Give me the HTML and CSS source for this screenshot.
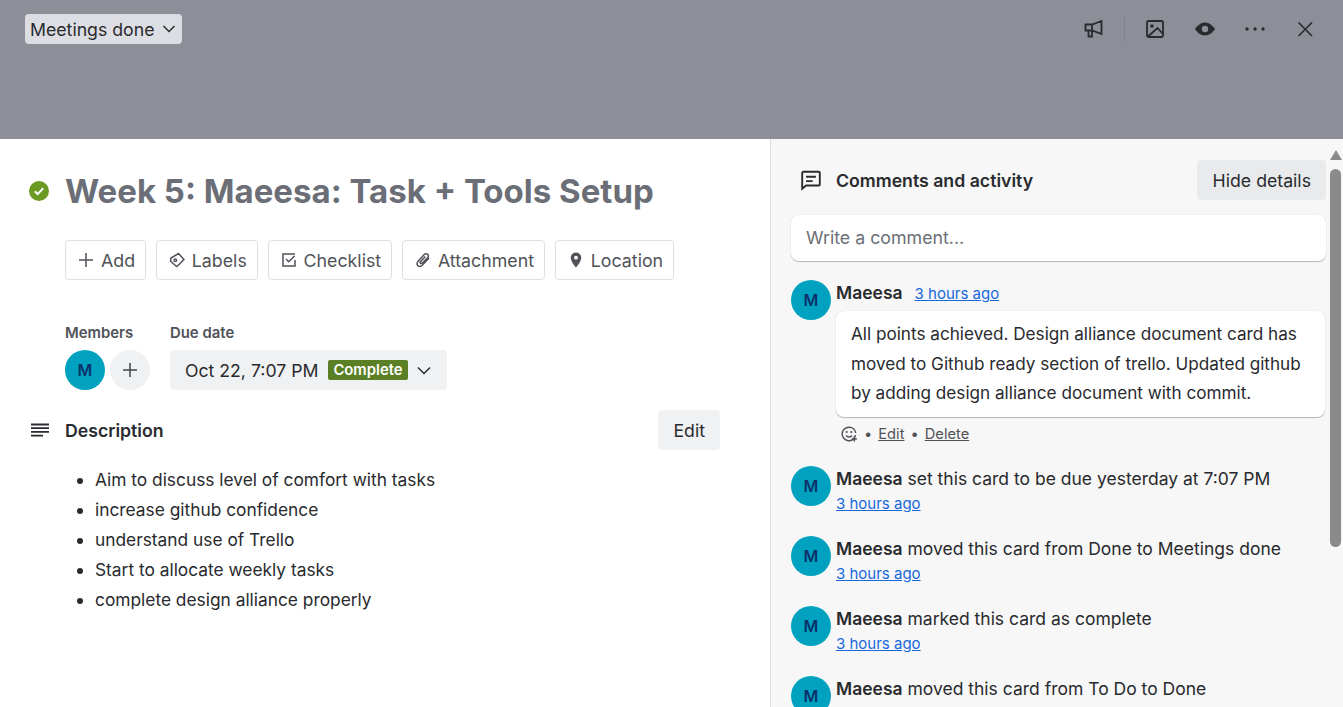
FILE: index.html
```html
<!DOCTYPE html>
<html lang="en">
<head>
    <meta charset="UTF-8">
    <meta name="viewport" content="width=device-width, initial-scale=1.0">
    <title>Week 5: Maeesa: Task + Tools Setup</title>
    <link rel="stylesheet" href="styles.css">
</head>
<body>

    <header class="cover">
        <button class="list-select">Meetings done
            <svg class="chevron" viewBox="0 0 16 16"><path d="M2.500 5l5.500 5.500L13.500 5"/></svg>
        </button>
        <div class="cover-actions">
            <svg class="cover-icon megaphone" viewBox="0 0 20 20"><path d="M1.500 5.500H8L17.500 2v13L8 11.500H1.500z M4.500 11.500v6H8v-6 M8 5.500v6"/></svg>
            <span class="cover-divider"></span>
            <svg class="cover-icon image" viewBox="0 0 20 20"><rect x="2" y="2" width="16" height="16" rx="1.500"/><path d="M3 17.500L12.500 9l5 5.500"/><circle class="solid" cx="7" cy="7" r="1.800"/></svg>
            <svg class="cover-icon eye" viewBox="0 0 20 20"><path class="solid" fill-rule="evenodd" d="M10 3.500c4.500 0 8 3.500 10 6.500-2 3-5.500 6.500-10 6.500S2 13 0 10c2-3 5.500-6.500 10-6.500zm0 3.300a3.200 3.200 0 100 6.400 3.200 3.200 0 000-6.400z"/></svg>
            <svg class="cover-icon dots" viewBox="0 0 20 20"><circle class="solid" cx="2" cy="10" r="1.700"/><circle class="solid" cx="10" cy="10" r="1.700"/><circle class="solid" cx="18" cy="10" r="1.700"/></svg>
            <svg class="cover-icon close" viewBox="0 0 20 20"><path d="M3.500 3.500l13.500 13.500M17 3.500L3.500 17"/></svg>
        </div>
    </header>

    <div class="card">
        <main class="details">
            <div class="title-row">
                <svg class="done-icon" viewBox="0 0 20 20"><circle cx="10" cy="10" r="10"/><path d="M5.800 10.300l2.800 2.800 5.600-5.800"/></svg>
                <h1>Week 5: Maeesa: Task + Tools Setup</h1>
            </div>

            <div class="actions">
                <button class="action">
                    <svg viewBox="0 0 16 16"><path d="M8 1v14M1 8h14"/></svg>Add
                </button>
                <button class="action">
                    <svg viewBox="0 0 16 16"><path d="M9.500 1.500l5.500 6-6.500 6.500c-.5.500-1 .500-1.500 0L2.500 10C2 9.500 1.500 9 1.500 8.500L2 6z"/><circle cx="6.300" cy="8.300" r="1.300"/></svg>Labels
                </button>
                <button class="action">
                    <svg viewBox="0 0 16 16"><path d="M14 2H2v12h12V8"/><path d="M5 7l2.700 2.700L13.500 4"/></svg>Checklist
                </button>
                <button class="action">
                    <svg viewBox="0 0 16 16"><path d="M14 6l-6.500 7c-1.500 1.500-3.500 1.700-4.700.6s-1-3 .5-4.600l5.700-6.200c1-1 2.600-1.300 3.700-.4s.9 2.500-.1 3.500L7.300 11c-.6.600-1.300.7-1.800.2s-.4-1.200.2-1.800L10.300 4.500"/></svg>Attachment
                </button>
                <button class="action">
                    <svg viewBox="0 0 16 16"><path class="solid" fill-rule="evenodd" d="M8 .5c2.900 0 5.200 2.200 5.200 5.200 0 3.100-3.100 7.500-5.200 9.800-2.100-2.300-5.200-6.700-5.200-9.800C2.800 2.700 5.100.5 8 .5zm0 3.300a1.900 1.900 0 100 3.800 1.900 1.900 0 000-3.800z"/></svg>Location
                </button>
            </div>

            <div class="meta">
                <div>
                    <h3>Members</h3>
                    <div class="member-row">
                        <span class="avatar">M</span>
                        <span class="add-member"><svg viewBox="0 0 16 16"><path d="M8 1v14M1 8h14"/></svg></span>
                    </div>
                </div>
                <div>
                    <h3>Due date</h3>
                    <button class="due">
                        Oct 22, 7:07 PM
                        <span class="badge">Complete</span>
                        <svg class="chevron" viewBox="0 0 16 16"><path d="M2 5.500L8 11.500l6-6"/></svg>
                    </button>
                </div>
            </div>

            <section class="description">
                <div class="description-head">
                    <svg class="lines" viewBox="0 0 20 14"><path d="M1 1.500h18M1 5.200h18M1 8.900h18M1 12.600h12"/></svg>
                    <h2>Description</h2>
                    <button class="edit">Edit</button>
                </div>
                <ul>
                    <li>Aim to discuss level of comfort with tasks</li>
                    <li>increase github confidence</li>
                    <li>understand use of Trello</li>
                    <li>Start to allocate weekly tasks</li>
                    <li>complete design alliance properly</li>
                </ul>
            </section>
        </main>

        <aside class="sidebar">
            <div class="sidebar-head">
                <svg class="comment-icon" viewBox="0 0 20 20"><path d="M3 2.500h14c.5 0 1 .5 1 1V14c0 .5-.5 1-1 1H5.500L2 18V3.500c0-.5.500-1 1-1z"/><path d="M5.500 7h9M5.500 11h6"/></svg>
                <h2>Comments and activity</h2>
                <button class="hide">Hide details</button>
            </div>
            <div class="comment-box">Write a comment...</div>

            <div class="entry comment-entry">
                <span class="avatar">M</span>
                <div class="entry-body">
                    <div class="comment-head"><b>Maeesa</b><a href="#">3 hours ago</a></div>
                    <div class="comment-text">All points achieved. Design alliance document card has moved to Github ready section of trello. Updated github by adding design alliance document with commit.</div>
                    <div class="comment-links">
                        <svg viewBox="0 0 16 16"><path d="M14.500 9A6.700 6.700 0 118 1.300 6.700 6.700 0 0114.700 7"/><path d="M5 9.500c1.500 2 4.500 2 6 0"/><circle class="solid" cx="5.700" cy="6" r="1.100"/><circle class="solid" cx="10.300" cy="6" r="1.100"/><path d="M13.300 10.500v5M10.800 13h5"/></svg>
                        <span class="dot">•</span><a href="#">Edit</a><span class="dot">•</span><a href="#">Delete</a>
                    </div>
                </div>
            </div>

            <div class="entry">
                <span class="avatar">M</span>
                <div class="entry-body"><b>Maeesa</b> set this card to be due yesterday at 7:07 PM<br><a href="#">3 hours ago</a></div>
            </div>
            <div class="entry">
                <span class="avatar">M</span>
                <div class="entry-body"><b>Maeesa</b> moved this card from Done to Meetings done<br><a href="#">3 hours ago</a></div>
            </div>
            <div class="entry">
                <span class="avatar">M</span>
                <div class="entry-body"><b>Maeesa</b> marked this card as complete<br><a href="#">3 hours ago</a></div>
            </div>
            <div class="entry">
                <span class="avatar">M</span>
                <div class="entry-body"><b>Maeesa</b> moved this card from To Do to Done</div>
            </div>
        </aside>

        <div class="scrollbar">
            <span class="scroll-up"></span>
            <span class="scroll-thumb"></span>
        </div>
    </div>

</body>
</html>
```

FILE: styles.css
```css
* {
    box-sizing: border-box;
}
html, body {
    height: 100%;
}
body {
    font-family: Inter, "Liberation Sans", sans-serif;
    margin: 0;
    overflow: hidden;
    color: #292a2e;
    background-color: #fff;
    font-size: 16px;
}
button {
    font-family: inherit;
    font-size: 16px;
    border: none;
    cursor: pointer;
}
svg {
    display: block;
    fill: none;
    stroke: currentColor;
    stroke-width: 1.5;
}
svg .solid {
    fill: currentColor;
    stroke: none;
}
a {
    color: #1868db;
}

/* cover */
.cover {
    height: 139px;
    background-color: #8c8f97;
    display: flex;
    justify-content: space-between;
    align-items: flex-start;
    padding: 14px 28px 0 25px;
}
.list-select {
    height: 30px;
    padding: 0 5px;
    display: flex;
    align-items: center;
    gap: 7px;
    background-color: #dddee3;
    color: #292a2e;
    border-radius: 4px;
    font-size: 17.700px;
}
.list-select .chevron {
    width: 16px;
    height: 16px;
}
.cover-actions {
    display: flex;
    align-items: center;
    height: 30px;
    color: #292a2e;
}
.cover-icon {
    width: 20px;
    height: 20px;
    stroke-width: 1.800;
}
.cover-divider {
    width: 1px;
    height: 26px;
    margin: 0 20px;
    background-color: #80838b;
}
.image,
.eye,
.dots {
    margin-right: 30px;
}
.close {
    stroke-width: 1.600;
}

/* card layout */
.card {
    height: 568px;
    display: flex;
    overflow: hidden;
}
.details {
    width: 771px;
    flex: none;
    padding: 34px 50px 0 29px;
    border-right: 1px solid #dcdfe4;
    color: #44454c;
}
.title-row {
    display: flex;
    align-items: center;
    gap: 16px;
    height: 36px;
}
.done-icon {
    width: 20px;
    height: 20px;
    flex: none;
}
.done-icon circle {
    fill: #6a9a23;
    stroke: none;
}
.done-icon path {
    stroke: #fff;
    stroke-width: 2;
}
h1 {
    margin: 0;
    font-size: 33px;
    font-weight: 700;
    color: #6b6e76;
    white-space: nowrap;
}
.actions {
    display: flex;
    gap: 9.750px;
    margin: 31px 0 0 36px;
}
.action {
    height: 40px;
    padding: 0 10px 0 12px;
    display: flex;
    align-items: center;
    gap: 7px;
    background-color: #fff;
    color: #505258;
    font-size: 17.800px;
    border: 1px solid #dcdfe4;
    border-radius: 4px;
}
.action svg {
    width: 16px;
    height: 16px;
}
.meta {
    display: flex;
    gap: 20px;
    margin: 44px 0 0 36px;
}
h3 {
    margin: 0 0 8px;
    font-size: 14.900px;
    line-height: 18px;
    font-weight: 600;
    color: #505258;
}
.member-row {
    display: flex;
    gap: 5px;
}
.avatar {
    width: 40px;
    height: 40px;
    flex: none;
    border-radius: 50%;
    background-color: #00a2c0;
    color: #09326c;
    font-size: 16px;
    font-weight: 600;
    display: flex;
    align-items: center;
    justify-content: center;
}
.add-member {
    width: 40px;
    height: 40px;
    border-radius: 50%;
    background-color: #f0f1f2;
    color: #44454c;
    display: flex;
    align-items: center;
    justify-content: center;
}
.add-member svg {
    width: 16px;
    height: 16px;
}
.due {
    height: 40px;
    padding: 0 15px;
    display: flex;
    align-items: center;
    background-color: #f0f1f2;
    color: #292a2e;
    font-size: 17.660px;
    border-radius: 4px;
}
.badge {
    margin: 0 8px 0 10px;
    padding: 0 5px;
    height: 20px;
    line-height: 20px;
    background-color: #5b7f24;
    color: #fff;
    font-size: 14.850px;
    font-weight: 600;
    border-radius: 2px;
}
.due .chevron {
    width: 16px;
    height: 16px;
}
.description {
    margin-top: 20px;
}
.description-head {
    display: flex;
    align-items: center;
    height: 40px;
}
.lines {
    width: 20px;
    height: 14px;
    margin: 0 15px 0 1px;
    stroke-width: 1.800;
    color: #292a2e;
}
h2 {
    margin: 0;
    font-size: 17.700px;
    font-weight: 600;
    color: #292a2e;
}
.edit {
    margin-left: auto;
    height: 40px;
    padding: 0 15px;
    background-color: #f0f1f2;
    color: #292a2e;
    font-size: 17.700px;
    border-radius: 4px;
}
.description ul {
    margin: 15px 0 0;
    padding-left: 66px;
    font-size: 17.340px;
    line-height: 30px;
    color: #292a2e;
}

/* comments column */
.sidebar {
    flex: 1;
    min-width: 0;
    background-color: #f7f7f7;
    padding: 21px 2px 0 20px;
    font-size: 17.500px;
    color: #292a2e;
}
.sidebar-head {
    display: flex;
    align-items: center;
    height: 40px;
}
.comment-icon {
    width: 22px;
    height: 22px;
    margin: 0 14px 0 9px;
    stroke-width: 1.700;
}
.hide {
    margin-left: auto;
    height: 40px;
    padding: 0 15px 0 16px;
    background-color: #e9eaec;
    color: #292a2e;
    font-size: 17.700px;
    border-radius: 4px;
}
.comment-box {
    height: 46px;
    margin: 15px 0 0;
    padding: 0 15px 1px;
    display: flex;
    align-items: center;
    background-color: #fff;
    color: #6b6e76;
    font-size: 17.800px;
    border-radius: 8px;
    box-shadow: 0 1px 1px #b3b5b9, 0 0 1px #d5d6d8;
}
.entry {
    display: flex;
    gap: 5px;
    margin-bottom: 20px;
    height: 50px;
    line-height: 24px;
}
.comment-entry {
    height: auto;
    margin-top: 18px;
    margin-bottom: 14px;
}
.entry .avatar {
    margin-top: 1px;
}
.entry-body {
    flex: 1;
    min-width: 0;
    padding-top: 2px;
    white-space: nowrap;
    font-size: 17.500px;
}
.entry-body a {
    font-size: 15px;
}
b {
    font-weight: 600;
}
.comment-head {
    height: 28px;
}
.comment-head a {
    margin-left: 12px;
}
.comment-text {
    margin: 2px 1px 0 0;
    padding: 8px 15px 9.500px;
    white-space: normal;
    font-size: 17.150px;
    line-height: 29.500px;
    background-color: #fff;
    border-radius: 8px;
    box-shadow: 0 1px 1px #b3b5b9, 0 0 1px #d5d6d8;
}
.comment-links {
    display: flex;
    align-items: center;
    gap: 6px;
    height: 34px;
    padding-left: 5px;
    font-size: 14.700px;
    color: #505258;
}
.comment-links a {
    color: #505258;
    font-size: 14.700px;
}
.comment-links svg {
    width: 16px;
    height: 16px;
    margin-right: 1px;
}

/* scrollbar */
.scrollbar {
    width: 15px;
    flex: none;
    background-color: #f7f7f7;
    padding: 11px 0 0 2px;
}
.scroll-up {
    display: block;
    width: 0;
    border: 6.500px solid transparent;
    border-top: none;
    border-bottom: 10px solid #8a8a8a;
}
.scroll-thumb {
    display: block;
    width: 11px;
    height: 378px;
    margin-top: 9px;
    background-color: #8a8a8a;
    border-radius: 6px;
}
```
